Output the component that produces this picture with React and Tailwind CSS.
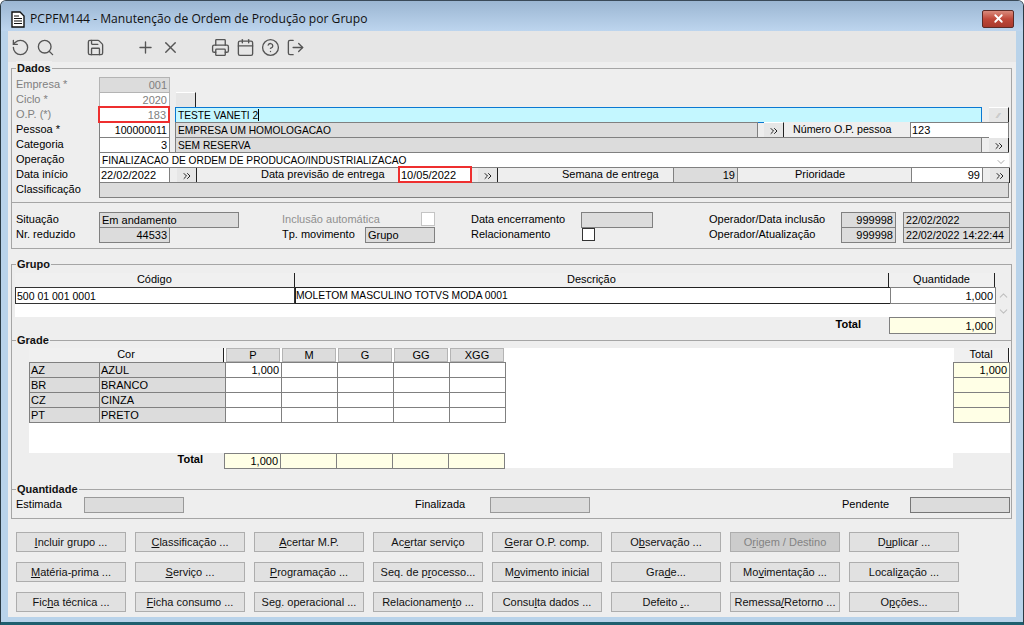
import { RotateCcw, Search, Save, Plus, X, Printer, Calendar, CircleHelp, LogOut, ChevronsRight, ChevronDown, ChevronUp } from 'lucide-react';

function Field({ className = '', tone = 'white', align = 'left', children }) {
  const tones = {
    white: 'bg-white border-[#808080] text-black',
    ro: 'bg-[#dcdcdc] border-[#808080] text-black',
    off: 'bg-[#dcdcdc] border-[#b4b4b4] text-[#808080]',
    offWhite: 'bg-white border-[#b4b4b4] text-[#808080]',
    yellow: 'bg-[#ffffe6] border-[#808080] text-black',
  };
  return (
    <div className={`shrink-0 h-[16px] border leading-[15px] px-[1px] overflow-hidden whitespace-nowrap ${tones[tone]} ${align === 'right' ? 'text-right pr-[2px]' : 'text-left'} ${className}`}>
      {children}
    </div>
  );
}

function MoreBtn({ className = '', disabled = false }) {
  return (
    <div className={`shrink-0 w-[20px] h-[16px] bg-[#e6e6e6] border-r border-r-[#222] border-t border-t-white flex items-center justify-center ${className}`}>
      {disabled ? (
        <span className="text-[8px] leading-none text-[#b0b0b0]">⁄⁄</span>
      ) : (
        <ChevronsRight size={12} strokeWidth={2} color="#222" />
      )}
    </div>
  );
}

function Legend({ children }) {
  return <span className="absolute left-[4px] -top-[8px] bg-[#eeeeee] px-[1px] font-bold leading-[14px] text-[#111]">{children}</span>;
}

const buttons = [
  [<><u>I</u>ncluir grupo ...</>], [<><u>C</u>lassificação ...</>], [<><u>A</u>certar M.P.</>], [<>Ac<u>e</u>rtar serviço</>],
  [<><u>G</u>erar O.P. comp.</>], [<>O<u>b</u>servação ...</>], [<>O<u>r</u>igem / Destino</>, true], [<>D<u>u</u>plicar ...</>],
  [<><u>M</u>atéria-prima ...</>], [<><u>S</u>erviço ...</>], [<><u>P</u>rogramação ...</>], [<>Seq. de p<u>r</u>ocesso...</>],
  [<>M<u>o</u>vimento inicial</>], [<>Gra<u>d</u>e...</>], [<>Mo<u>v</u>imentação ...</>], [<>Locali<u>z</u>ação ...</>],
  [<>Fic<u>h</u>a técnica ...</>], [<><u>F</u>icha consumo ...</>], [<>Se<u>g</u>. operacional ...</>], [<>Relacionamen<u>t</u>o ...</>],
  [<>Consu<u>l</u>ta dados ...</>], [<>Defeito <u>.</u>..</>], [<>Remessa<u>/</u>Retorno ...</>], [<>O<u>p</u>ções...</>],
];

const cores = [
  ['AZ', 'AZUL', '1,000'],
  ['BR', 'BRANCO', ''],
  ['CZ', 'CINZA', ''],
  ['PT', 'PRETO', ''],
];

const tamanhos = ['P', 'M', 'G', 'GG', 'XGG'];

export default function App() {
  return (
    <div className="w-[1024px] h-[625px] overflow-hidden bg-[#b9d3ea] border-x border-x-[#2a3a44] border-b-[3px] border-b-[#1f5f6e] border-t border-t-[#3a4a58] rounded-t-[6px] text-[11px] text-black font-['Liberation_Sans',Arial,sans-serif] flex flex-col">
      {/* Barra de titulo */}
      <div className="h-[30px] shrink-0 flex items-center pt-[7px] pl-[10px] pr-[9px] bg-gradient-to-b from-[#9bb6d2] to-[#bdd5ee]">
        <svg width="14" height="17" viewBox="0 0 14 17" className="shrink-0">
          <path d="M1 1h8l4 4v11H1z" fill="#fff" stroke="#111" strokeWidth="1.4" />
          <path d="M3 5h5M3 7.5h8M3 10h8M3 12.5h8" stroke="#111" strokeWidth="1.2" />
        </svg>
        <span className="ml-[5px] text-[12.1px] text-[#111] font-['Open_Sans',sans-serif] leading-none">PCPFM144 - Manutenção de Ordem de Produção por Grupo</span>
        <div className="ml-auto -mt-[2px] w-[32px] h-[18px] rounded-[2px] border border-[#5c2a26] bg-gradient-to-b from-[#d98a7c] via-[#c0483a] to-[#a83a2e] flex items-center justify-center">
          <X size={13} strokeWidth={3.4} color="#fff" />
        </div>
      </div>

      <div className="mx-[7px] h-[586px] shrink-0 bg-[#eeeeee] flex flex-col">
        {/* Barra de ferramentas */}
        <div className="h-[31px] shrink-0 bg-[#e6e6e6] pt-[2px] flex items-center text-[#555]">
          {[RotateCcw, Search, null, Save, null, Plus, X, null, Printer, Calendar, CircleHelp, LogOut].map((Icon, i) => (
            <div key={i} className="w-[25px] flex justify-center">
              {Icon && <Icon size={19} strokeWidth={1.7} />}
            </div>
          ))}
        </div>

        {/* Dados */}
        <div className="relative mt-[6px] ml-[3px] w-[1001px] h-[181px] shrink-0 border border-[#a5a5a5]">
          <Legend>Dados</Legend>
          <div className="h-[134px] pt-[8px] pl-[4px] border-b border-[#a5a5a5]">
            <div className="flex h-[15px] items-start">
              <span className="w-[83px] leading-[15px] text-[#808080]">Empresa *</span>
              <Field className="w-[71px]" tone="off" align="right">001</Field>
            </div>
            <div className="flex h-[15px] items-start">
              <span className="w-[83px] leading-[15px] text-[#808080]">Ciclo *</span>
              <Field className="w-[71px]" tone="offWhite" align="right">2020</Field>
              <MoreBtn className="ml-[6px] [&>svg]:hidden" />
            </div>
            <div className="flex h-[15px] items-start">
              <span className="w-[83px] leading-[15px] text-[#808080]">O.P. (*)</span>
              <Field className="relative z-10 w-[72px] h-[17px] -ml-px -mt-px !border-2 !border-[#ee2f2f] leading-[15px]" tone="offWhite" align="right">183</Field>
              <Field className="ml-[5px] w-[807px] !bg-[#c4f7ff] !border-[#0a78d2] text-[10.2px] pl-[2px]">
                TESTE VANETI 2<span className="inline-block w-px h-[12px] bg-black align-[-2px]" />
              </Field>
              <MoreBtn className="ml-[7px]" disabled />
            </div>
            <div className="flex h-[15px] items-start">
              <span className="w-[83px] leading-[15px]">Pessoa *</span>
              <Field className="w-[71px] text-[10.6px]" align="right">100000011</Field>
              <Field className="ml-[5px] w-[583px] pl-[2px] text-[10.2px]" tone="ro">EMPRESA UM HOMOLOGACAO</Field>
              <MoreBtn className="ml-[6px]" />
              <span className="w-[126px] pl-[9px] leading-[14px] bg-[#eeeeee] text-[10.7px]">Número O.P. pessoa</span>
              <Field className="w-[99px]">123</Field>
            </div>
            <div className="flex h-[15px] items-start">
              <span className="w-[83px] leading-[15px]">Categoria</span>
              <Field className="w-[71px]" align="right">3</Field>
              <Field className="ml-[5px] w-[807px] pl-[2px] text-[10.2px]" tone="ro">SEM RESERVA</Field>
              <MoreBtn className="ml-[7px]" />
            </div>
            <div className="flex h-[15px] items-start">
              <span className="w-[83px] leading-[15px]">Operação</span>
              <Field className="w-[910px] !border-r-0 relative pl-[2px] text-[10.2px]">
                FINALIZACAO DE ORDEM DE PRODUCAO/INDUSTRIALIZACAO
                <ChevronDown size={12} strokeWidth={1} color="#555" className="absolute right-[2px] top-[3px]" />
              </Field>
            </div>
            <div className="flex h-[15px] items-start">
              <span className="w-[83px] leading-[15px]">Data início</span>
              <Field className="w-[71px]">22/02/2022</Field>
              <MoreBtn className="ml-[7px]" />
              <span className="w-[201px] pl-[64px] leading-[14px]">Data previsão de entrega</span>
              <Field className="relative z-10 w-[74px] h-[17px] -mt-px !border-2 !border-[#ee2f2f] pl-[1px]">10/05/2022</Field>
              <MoreBtn className="ml-[6px]" />
              <span className="w-[175px] pl-[64px] leading-[14px]">Semana de entrega</span>
              <Field className="w-[65px]" tone="ro" align="right">19</Field>
              <span className="w-[173px] pl-[57px] leading-[14px]">Prioridade</span>
              <Field className="w-[72px]" align="right">99</Field>
              <MoreBtn className="ml-[7px]" />
            </div>
            <div className="flex h-[15px] items-start">
              <span className="w-[83px] leading-[15px]">Classificação</span>
              <Field className="w-[910px]" tone="ro" />
            </div>
          </div>

          <div className="pt-[9px] pl-[4px]">
            <div className="flex h-[15px] items-start">
              <span className="w-[83px] leading-[15px]">Situação</span>
              <Field className="w-[140px] pl-[2px]" tone="ro">Em andamento</Field>
              <span className="ml-[43px] w-[139px] leading-[15px] text-[#909090]">Inclusão automática</span>
              <div className="w-[14px] h-[14px] bg-white border border-[#c4c4c4]" />
              <span className="ml-[36px] w-[110px] leading-[15px]">Data encerramento</span>
              <Field className="w-[72px]" tone="ro" />
              <span className="ml-[56px] w-[132px] leading-[15px]">Operador/Data inclusão</span>
              <Field className="w-[55px]" tone="ro" align="right">999998</Field>
              <Field className="ml-[7px] w-[107px] pl-[2px] text-[10.7px]" tone="ro">22/02/2022</Field>
            </div>
            <div className="flex h-[15px] items-start">
              <span className="w-[83px] leading-[15px]">Nr. reduzido</span>
              <Field className="w-[71px]" tone="ro" align="right">44533</Field>
              <span className="ml-[112px] w-[83px] leading-[15px]">Tp. movimento</span>
              <Field className="w-[70px] pl-[2px]" tone="ro">Grupo</Field>
              <span className="ml-[36px] w-[111px] leading-[15px]">Relacionamento</span>
              <div className="w-[13px] h-[13px] mt-[1px] bg-white border border-[#333]" />
              <span className="ml-[114px] w-[132px] leading-[15px]">Operador/Atualização</span>
              <Field className="w-[55px]" tone="ro" align="right">999998</Field>
              <Field className="ml-[7px] w-[107px] pl-[2px] text-[10.7px]" tone="ro">22/02/2022 14:22:44</Field>
            </div>
          </div>
        </div>

        {/* Grupo / Grade / Quantidade */}
        <div className="mt-[15px] ml-[3px] w-[1001px] h-[255px] shrink-0 border border-[#a5a5a5]">
          <div className="relative h-[75px] pt-[8px] pl-[3px]">
            <Legend>Grupo</Legend>
            <div className="flex h-[14px] w-[980px] leading-[13px] bg-[#f0f0f0] text-center">
              <span className="w-[280px] border-r border-r-[#222]">Código</span>
              <span className="w-[595px] border-r border-r-[#222]">Descrição</span>
              <span className="w-[106px] border-r border-r-[#222]">Quantidade</span>
            </div>
            <div className="flex items-start">
              <Field className="w-[280px] h-[17px] !border-[#333] pl-[1px] leading-[16px] text-[10.5px]">500 01 001 0001</Field>
              <Field className="w-[595px] h-[17px] !border-[#222] !border-r-0 pl-[0px] leading-[16px] text-[10.3px]">MOLETOM MASCULINO TOTVS MODA 0001</Field>
              <Field className="w-[106px] h-[17px] leading-[16px]" align="right">1,000</Field>
              <ChevronUp size={13} strokeWidth={2} color="#c0c0c0" className="ml-[1px] mt-[2px]" />
            </div>
            <div className="flex items-start">
              <div className="w-[980px] h-[13px] bg-white" />
              <ChevronDown size={13} strokeWidth={2} color="#c0c0c0" className="ml-[2px] mt-[1px]" />
            </div>
            <div className="flex items-start -mt-px">
              <span className="w-[846px] text-right font-bold leading-[14px]">Total</span>
              <Field className="ml-[28px] w-[107px] h-[17px] leading-[16px]" tone="yellow" align="right">1,000</Field>
            </div>
          </div>

          <div className="relative h-[149px] border-t border-[#a5a5a5] pt-[7px] pl-[17px] flex items-start">
            <Legend>Grade</Legend>
            <div className="w-[924px] h-[120px] bg-white flex flex-col">
              <div className="flex h-[14px] leading-[13px] text-center">
                <span className="w-[195px] bg-[#f0f0f0] border-r border-r-[#222]">Cor</span>
                {tamanhos.map((t) => (
                  <span key={t} className="w-[54px] ml-[2px] bg-[#dcdcdc] border border-[#b4b4b4] leading-[12px]">{t}</span>
                ))}
              </div>
              {cores.map((c) => (
                <div key={c[0]} className="flex h-[15px] items-start">
                  <Field className="w-[71px]" tone="ro">{c[0]}</Field>
                  <Field className="-ml-px w-[127px]" tone="ro">{c[1]}</Field>
                  {tamanhos.map((t, i) => (
                    <Field key={t} className="-ml-px w-[57px]" align="right">{i === 0 ? c[2] : ''}</Field>
                  ))}
                </div>
              ))}
              <div className="h-[30px]" />
              <div className="flex h-[15px] items-start mt-[1px]">
                <span className="w-[195px] h-[15px] bg-[#eeeeee] pr-[21px] text-right font-bold leading-[13px]">Total</span>
                {tamanhos.map((t, i) => (
                  <Field key={t} className="-ml-px first-of-type:ml-0 w-[57px]" tone="yellow" align="right">{i === 0 ? '1,000' : ''}</Field>
                ))}
              </div>
            </div>
            <div className="w-[57px] h-[105px] bg-white">
              <div className="h-[14px] ml-[1px] w-[55px] bg-[#f0f0f0] border-r border-r-[#222] text-center leading-[13px]">Total</div>
              {cores.map((c) => (
                <div key={c[0]} className="h-[15px]">
                  <Field className="w-[57px]" tone="yellow" align="right">{c[2]}</Field>
                </div>
              ))}
            </div>
          </div>

          <div className="relative h-[29px] border-t border-[#a5a5a5] pt-[7px] pl-[4px] flex items-start">
            <Legend>Quantidade</Legend>
            <span className="w-[68px] leading-[15px]">Estimada</span>
            <Field className="w-[100px] !border-[#999]" tone="ro" />
            <span className="ml-[231px] w-[75px] leading-[15px]">Finalizada</span>
            <Field className="w-[100px] !border-[#999]" tone="ro" />
            <span className="ml-[252px] w-[68px] leading-[15px]">Pendente</span>
            <Field className="w-[100px] !border-[#777]" tone="ro" />
          </div>
        </div>

        {/* Botoes */}
        <div className="mt-[13px] ml-[8px] grid grid-cols-[repeat(8,110px)] gap-x-[9px] gap-y-[10px]">
          {buttons.map(([label, disabled], i) => (
            <div
              key={i}
              className={`h-[20px] border border-[#adadad] text-center leading-[18px] ${disabled ? 'bg-[#cccccc] text-[#838383]' : 'bg-[#e1e1e1] text-[#111]'}`}
            >
              {label}
            </div>
          ))}
        </div>
      </div>
    </div>
  );
}
